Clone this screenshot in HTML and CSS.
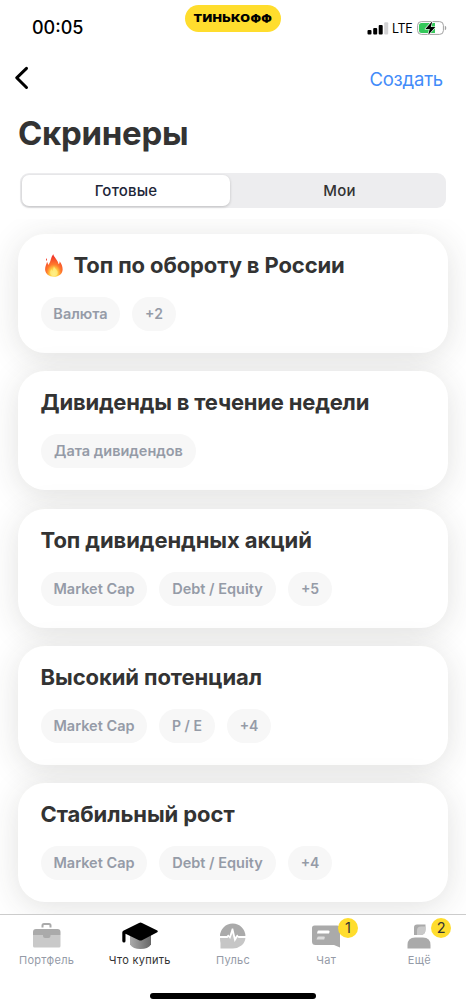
FILE: index.html
```html
<!DOCTYPE html>
<html lang="ru">
<head>
<meta charset="utf-8">
<title>Скринеры</title>
<link rel="stylesheet" href="styles.css">
</head>
<body>
<div class="screen">
  <header class="status">
    <span class="time">00:05</span>
    <span class="brand"><span class="wordmark">ТИНЬКОФФ</span></span>
    <div class="indicators">
      <svg class="signal" width="22" height="14" viewBox="0 0 22 14"><rect x="0.5" y="9" width="4" height="4.500" rx="1"/><rect x="6.200" y="7" width="4" height="6.500" rx="1"/><rect x="11.700" y="4" width="4" height="9.500" rx="1"/><rect x="17.200" y="1.300" width="4" height="12.200" rx="1" fill="#d2d2d4"/></svg>
      <span class="lte">LTE</span>
      <svg class="battery" width="30" height="16" viewBox="0 0 30 16"><rect x=".6" y="1.600" width="25.800" height="12.800" rx="3.800" fill="#fff" stroke="#a2a2a2"/><path d="M4.500 3H18v10H4.500Q2 13 2 10.500v-5Q2 3 4.500 3z" fill="#34c85a"/><path d="M27.800 5.800q1.500.5 1.500 2.200t-1.500 2.200z" fill="#a2a2a2"/><path d="M15.300 1.200 8.300 9h4.400l-1.500 5.900L18.300 7h-4.500z" fill="#000" stroke="#fff" stroke-width="1.200" paint-order="stroke" stroke-linejoin="round"/></svg>
    </div>
  </header>
  <nav class="topbar">
    <svg width="16" height="26" viewBox="0 0 16 26"><path d="M12.500 3.300 2.700 12.800l9.800 9.700" fill="none" stroke="#000" stroke-width="3" stroke-linecap="round" stroke-linejoin="round"/></svg>
    <a class="create">Создать</a>
  </nav>
  <h1 class="title">Скринеры</h1>
  <div class="segment"><span class="option selected">Готовые</span><span class="option">Мои</span></div>
  <main class="list">
    <section class="card"><h2 class="name"><svg class="fire" width="20" height="26" viewBox="0 0 22 28"><defs><radialGradient id="flame" cx=".5" cy=".86" r=".75"><stop offset="0" stop-color="#fff27a"/><stop offset=".3" stop-color="#ffd043"/><stop offset=".55" stop-color="#ff7a2c"/><stop offset="1" stop-color="#f2392a"/></radialGradient></defs><path d="M10.300 1.200c.5 3.500 5 6 5.800 11 .8-.7 1.200-1.800 1-3.400 2 2.500 3.500 5.500 3.400 9-.2 4.800-4 8-9.500 8S1.200 22.500 1.200 17.600c0-3.200 1.600-5.700 2.200-8.300.4 1.100 1 2 1.300 3.500C8 9.500 7 4.800 10.300 1.200zM2.700 5.500c.8.800.9 2 .2 3-.8-.8-.8-2-.2-3z" fill="url(#flame)"/><path d="M11 14c.4 3 4 4 4 7.300 0 2.300-1.700 4-4 4s-4.200-1.700-4.200-4c0-1.500.7-2.500 1.200-3.600.5.500.8 1 1 1.800 1.400-1.300 1.200-3.500 2-5.500z" fill="#fff08a" opacity=".7"/></svg><span class="n1">Топ по обороту в России</span></h2><div class="tags"><span class="tag cur">Валюта</span><span class="tag plus">+2</span></div></section>
    <section class="card"><h2 class="name"><span class="n2">Дивиденды в течение недели</span></h2><div class="tags"><span class="tag date">Дата дивидендов</span></div></section>
    <section class="card"><h2 class="name"><span>Топ дивидендных акций</span></h2><div class="tags"><span class="tag cap">Market Cap</span><span class="tag debt">Debt / Equity</span><span class="tag plus">+5</span></div></section>
    <section class="card"><h2 class="name"><span>Высокий потенциал</span></h2><div class="tags"><span class="tag cap">Market Cap</span><span class="tag pe">P / E</span><span class="tag plus">+4</span></div></section>
    <section class="card"><h2 class="name"><span>Стабильный рост</span></h2><div class="tags"><span class="tag cap">Market Cap</span><span class="tag debt">Debt / Equity</span><span class="tag plus">+4</span></div></section>
  </main>
  <footer class="tabs">
    <div class="tab"><svg width="40" height="32" viewBox="0 0 40 32"><path d="M15.500 7.500V5.500Q15.500 4 17 4h5q1.500 0 1.500 1.500v2" fill="none" stroke="#aaa" stroke-width="2"/><path d="M6 15h27.500v11q0 1.500-1.500 1.500H7.500Q6 27.500 6 26z" fill="#c9c9c9"/><path d="M9 9h21.500q3 0 3 3v3H23.500v1q0 2-2 2h-3.500q-2 0-2-2v-1H6v-3q0-3 3-3z" fill="#aaa"/></svg><span>Портфель</span></div>
    <div class="tab active"><svg width="40" height="32" viewBox="0 0 40 32"><defs><linearGradient id="cap"><stop offset="0" stop-color="#aaa"/><stop offset="1" stop-color="#666"/></linearGradient></defs><path d="M10 13v11.500Q13 29 20.500 29T31 24.500V13z" fill="url(#cap)"/><path d="M19 2.900q1.500-.6 3 0l15.300 7.700q1.200.8 0 1.600L22 20.200q-1.500.7-3 0L5.500 13.800V21q0 1.500-1.500 1.500T2.300 21v-8.600q0-1.100 1-1.600z" fill="#000"/></svg><span>Что купить</span></div>
    <div class="tab"><svg width="40" height="32" viewBox="0 0 40 32"><path d="M7 16a12.700 12.500 0 0 1 25.400 0h-7l-1.200-1.500-2 2.500L20.200 8.500h-1.400L16.500 16l-1.300-1.500L13.800 16z" fill="#aaa"/><path d="M7 18h7.500l1-1 1.700 2 2.200-6 2.200 9 3-5 1 1h6.800a12.700 11 0 0 1-12.900 10.500H7.500v-5.500Q7 21 7 18z" fill="#c6c6c6"/></svg><span>Пульс</span></div>
    <div class="tab"><svg width="40" height="32" viewBox="0 0 40 32"><path d="M8.500 5.500H31q3 0 3 3V27.500l-6-2.500H9.500q-3.500 0-3.500-3.500V8q0-2.500 2.500-2.500z" fill="#aaa"/><path d="M12.500 10.500h10q1.500 0 1 1.500l-.5 1.500H11l.5-2q.2-1 1-1z" fill="#fff"/><path d="M12.500 16.500h5.500q1 0 .8 1l-.6 2H10.500l.8-2q.2-1 1.200-1z" fill="#ddd"/></svg><span>Чат</span><b class="badge">1</b></div>
    <div class="tab"><svg width="40" height="32" viewBox="0 0 40 32"><path d="M18 4.500h8.500v5q0 5.500-5.500 5.500h-6V7.500q0-3 3-3z" fill="#aaa"/><path d="M18 15v-4.500q0-4 4-4h4.500v3q0 5.500-5.500 5.500z" fill="#c9c9c9"/><path d="M8.500 28.500V25q0-7.500 7.500-7.500h8q7.500 0 7.500 7.500v3.500z" fill="#aaa"/></svg><span>Ещё</span><b class="badge">2</b></div>
  </footer>
  <div class="home"></div>
</div>
</body>
</html>
```
FILE: styles.css
```css
* { box-sizing: border-box; }
body { margin: 0; background: #fff; font-family: Inter, sans-serif; color: #333; }
.screen { width: 466px; height: 1008px; overflow: hidden; display: flex; flex-direction: column; }
.status { height: 56px; display: grid; grid-template-columns: 185px 96px 1fr; align-items: start; flex: none; }
.time { margin: 17px 0 0 32px; font-size: 18px; line-height: 22px; font-weight: 500; color: #000; }
.brand { margin-top: 5px; height: 27px; border-radius: 14px; background: #ffdd2d; color: #000; display: grid; place-items: center; font: 900 10.800px/27px Inter, sans-serif; }
.wordmark { letter-spacing: .3px; transform: scaleX(1.16); }
.indicators { display: flex; align-items: center; margin: 20px 0 0 86px; height: 16px; }
.lte { width: 21px; margin-left: 3px; font-size: 12.500px; letter-spacing: -.3px; color: #000; }
.battery { margin-left: 4px; }
.topbar { height: 46px; padding: 0 23px 0 14px; display: flex; justify-content: space-between; align-items: center; flex: none; }
.topbar svg { margin-bottom: 2px; }
.create { color: #428bf9; font-size: 18.500px; letter-spacing: -.2px; }
.title { margin: 8px 0 0 18px; font-size: 33px; line-height: 46px; height: 46px; font-weight: 700; letter-spacing: -.3px; }
.segment { display: flex; margin: 17px 20px 0; height: 35px; border-radius: 9px; background: #ededef; padding: 2px; flex: none; }
.option { flex: 1; display: grid; place-items: center; font-size: 15px; font-weight: 500; letter-spacing: .2px; }
.option:last-child { padding-left: 5px; }
.selected { flex: 0 0 208px; background: #fff; border-radius: 7px; color: #1d2638; box-shadow: 0 1px 3px #0003; }
.list { margin-top: 11px; padding: 15px 18px 0; display: flex; flex-direction: column; gap: 18.300px; height: 695px; overflow: hidden; flex: none; }
.card { height: 119px; flex: none; border-radius: 27px; background: #fff; padding: 17px 23px; box-shadow: 0 5px 32px rgba(50, 50, 40, .145); }
.name { margin: 0; height: 28px; line-height: 28px; font-size: 22px; font-weight: 700; letter-spacing: -.08px; display: flex; align-items: center; white-space: nowrap; }
.name > span { margin-left: -.5px; }
.name .n2 { letter-spacing: -.2px; }
.name .n1 { letter-spacing: -.12px; }
.fire { margin: 2px 10px 0 3px; }
.tags { display: flex; gap: 12px; margin-top: 18px; }
.tag { height: 34px; line-height: 33px; border-radius: 17px; background: #f7f7f7; color: #959ba7; font-size: 14.500px; font-weight: 600; text-align: center; white-space: nowrap; }
.cur { width: 79px; }
.plus { width: 44px; }
.plus, .pe { font-size: 14px; }
.date { width: 155px; }
.cap { width: 106px; }
.debt { width: 117px; }
.pe { width: 56px; }
.tabs { height: 72px; border-top: 1px solid #ccc; display: grid; grid-template-columns: repeat(5, 93.200px); background: #fff; flex: none; }
.tab { position: relative; display: flex; flex-direction: column; align-items: center; padding-top: 5px; font-size: 11px; line-height: 14px; color: #959ba7; letter-spacing: .3px; }
.tab span { margin-top: 1px; }
.active { color: #333; }
.badge { position: absolute; left: 58.500px; top: 3px; width: 20px; height: 20px; border-radius: 50%; background: #ffdd2d; color: #333; font: 400 14.500px/20px Inter, sans-serif; letter-spacing: 0; text-align: center; }
.home { width: 166px; height: 6px; border-radius: 3px; background: #000; margin: 7px 0 0 150px; }
```
